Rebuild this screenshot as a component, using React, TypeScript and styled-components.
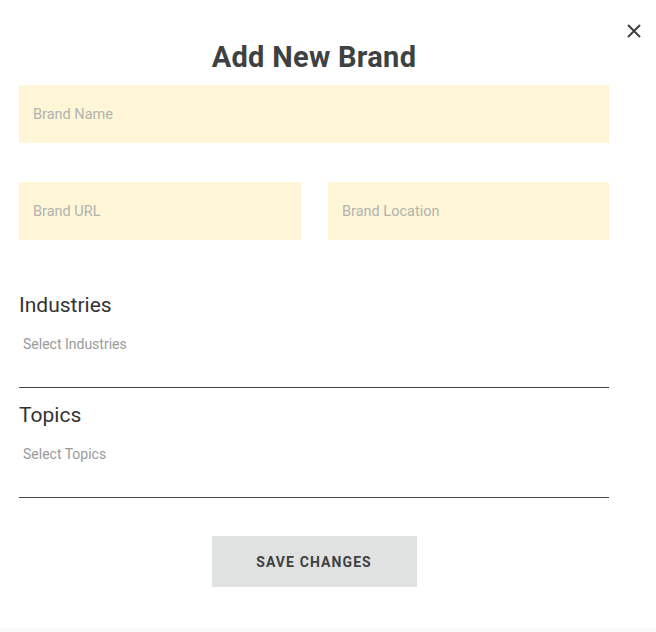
import styled, { createGlobalStyle } from "styled-components";

const GlobalStyle = createGlobalStyle`
  html, body {
    margin: 0;
    padding: 0;
    background: #fafafa;
  }
  * {
    box-sizing: border-box;
  }
`;

const AddBrand = () => {
  return (
    <>
      <GlobalStyle />
      <Modal>
        <CloseButton aria-label="Close">
          <svg width="16" height="16" viewBox="0 0 16 16">
            <path d="M2 2 L14 14 M14 2 L2 14" stroke="#3d4241" strokeWidth="2" />
          </svg>
        </CloseButton>
        <Title>Add New Brand</Title>
        <Form>
          <TextField placeholder="Brand Name" />
          <Row>
            <TextField placeholder="Brand URL" />
            <TextField placeholder="Brand Location" />
          </Row>
          <SelectGroup $top={53}>
            <Label>Industries</Label>
            <SelectBox>Select Industries</SelectBox>
          </SelectGroup>
          <SelectGroup $top={15}>
            <Label>Topics</Label>
            <SelectBox>Select Topics</SelectBox>
          </SelectGroup>
          <Actions>
            <SaveButton>SAVE CHANGES</SaveButton>
          </Actions>
        </Form>
      </Modal>
    </>
  );
};

const Modal = styled.div`
  position: relative;
  width: 656px;
  height: 628px;
  background: #fff;
  padding: 42px 47px 0 19px;
  font-family: Roboto, "Liberation Sans", sans-serif;
`;

const CloseButton = styled.button`
  position: absolute;
  top: 22px;
  right: 13px;
  width: 18px;
  height: 18px;
  padding: 0;
  border: 0;
  background: none;
  display: flex;
  align-items: center;
  justify-content: center;
  cursor: pointer;
`;

const Title = styled.h1`
  margin: 0 0 12px 0;
  text-align: center;
  font-family: Roboto, "Liberation Sans", sans-serif;
  font-size: 29px;
  line-height: 31px;
  font-weight: 700;
  color: #3d4241;
  letter-spacing: 0.3px;
`;

const Form = styled.div`
  display: flex;
  flex-direction: column;
`;

const Row = styled.div`
  display: grid;
  grid-template-columns: 282px 281px;
  justify-content: space-between;
  margin-top: 39px;
`;

const TextField = styled.input`
  width: 100%;
  height: 58px;
  border: 0;
  outline: none;
  background: #fef6d6;
  padding: 0 14px;
  font-family: Roboto, "Liberation Sans", sans-serif;
  font-size: 14.5px;
  color: #3d4241;

  &::placeholder {
    color: #b1b3b1;
  }
`;

const SelectGroup = styled.div<{ $top: number }>`
  display: flex;
  flex-direction: column;
  margin-top: ${(p) => p.$top}px;
`;

const Label = styled.div`
  font-size: 21px;
  line-height: 24px;
  color: #333;
`;

const SelectBox = styled.div`
  height: 71px;
  padding: 19px 4px 0;
  font-size: 14px;
  line-height: 16px;
  color: #9a9a9a;
  border-bottom: 1px solid #444;
`;

const Actions = styled.div`
  display: flex;
  justify-content: center;
  margin-top: 38px;
`;

const SaveButton = styled.button`
  width: 205px;
  height: 51px;
  border: 0;
  background: #e0e1e1;
  font-family: Roboto, "Liberation Sans", sans-serif;
  font-size: 14px;
  font-weight: 700;
  letter-spacing: 1.1px;
  color: #3d4241;
  cursor: pointer;
`;

export default AddBrand;
